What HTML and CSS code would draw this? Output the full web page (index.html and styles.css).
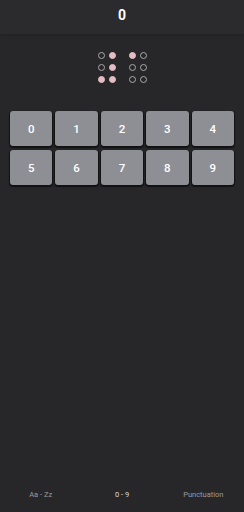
FILE: index.html
```html
<!DOCTYPE html>
<html>
<head>
<meta charset="utf-8">
<link rel="stylesheet" href="styles.css">
</head>
<body>
<div class="app">
  <header class="header">0</header>
  <main class="main">
    <div class="braille">
      <div class="cell">
        <span class="dot"></span><span class="dot on"></span>
        <span class="dot"></span><span class="dot on"></span>
        <span class="dot on"></span><span class="dot on"></span>
      </div>
      <div class="cell">
        <span class="dot on"></span><span class="dot"></span>
        <span class="dot"></span><span class="dot"></span>
        <span class="dot"></span><span class="dot"></span>
      </div>
    </div>
    <div class="keys">
      <button class="key">0</button>
      <button class="key">1</button>
      <button class="key">2</button>
      <button class="key">3</button>
      <button class="key">4</button>
      <button class="key">5</button>
      <button class="key">6</button>
      <button class="key">7</button>
      <button class="key">8</button>
      <button class="key">9</button>
    </div>
  </main>
  <nav class="tabs">
    <span class="tab">Aa - Zz</span>
    <span class="tab active">0 - 9</span>
    <span class="tab">Punctuation</span>
  </nav>
</div>
</body>
</html>
```
FILE: styles.css
```css
* { box-sizing: border-box; }
html, body { margin: 0; padding: 0; }
body {
  background: #272729;
  font-family: Roboto, "Liberation Sans", sans-serif;
  width: 244px;
  height: 512px;
  overflow: hidden;
}
.app {
  display: flex;
  flex-direction: column;
  height: 512px;
}
.header {
  height: 34px;
  background: #2b2b2d;
  color: #ffffff;
  font-weight: 700;
  font-size: 14px;
  display: flex;
  align-items: center;
  justify-content: center;
  padding-bottom: 5px;
  box-shadow: 0 1px 2px rgba(0,0,0,0.15);
}
.main {
  flex: 1;
  display: flex;
  flex-direction: column;
  align-items: center;
}
.braille {
  margin-top: 18px;
  display: flex;
  gap: 13px;
}
.cell {
  display: grid;
  grid-template-columns: 7px 7px;
  grid-auto-rows: 7px;
  column-gap: 4px;
  row-gap: 5px;
}
.dot {
  width: 7px;
  height: 7px;
  border-radius: 50%;
  border: 1px solid #a9a7aa;
}
.dot.on {
  background: #e4bcc4;
  border-color: #e4bcc4;
}
.keys {
  margin-top: 28px;
  width: 224px;
  display: grid;
  grid-template-columns: repeat(5, 1fr);
  column-gap: 3px;
  row-gap: 4px;
}
.key {
  height: 35px;
  border: none;
  border-radius: 3px;
  background: #8e8f95;
  color: #ffffff;
  font-family: Roboto, "Liberation Sans", sans-serif;
  font-weight: 500;
  font-size: 11.5px;
  padding: 0;
  box-shadow: 0 1px 1px 1px rgba(0,0,0,0.55);
}
.tabs {
  height: 34px;
  display: flex;
  align-items: center;
  padding-bottom: 2px;
}
.tab {
  flex: 1;
  text-align: center;
  font-size: 7.5px;
  color: #9b9b9d;
}
.tab.active {
  color: #d8d8da;
}
```
